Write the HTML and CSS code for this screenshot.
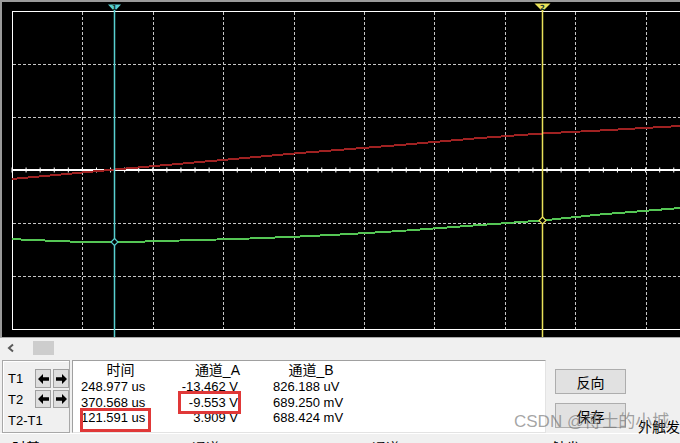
FILE: index.html
```html
<!DOCTYPE html>
<html lang="zh">
<head>
<meta charset="utf-8">
<title>示波器</title>
<link rel="stylesheet" href="styles.css">
</head>
<body>
<div class="scope">
  <svg class="screen" width="678" height="335" viewBox="2 2 678 335">
    <rect x="2" y="2" width="678" height="335" fill="#000"/>
    <g class="grid" stroke="#c6c6c6" stroke-width="1" stroke-dasharray="3 2" shape-rendering="crispEdges">
      <line x1="82.5" y1="12" x2="82.5" y2="329"/>
      <line x1="153.5" y1="12" x2="153.5" y2="329"/>
      <line x1="223.5" y1="12" x2="223.5" y2="329"/>
      <line x1="294.5" y1="12" x2="294.5" y2="329"/>
      <line x1="364.5" y1="12" x2="364.5" y2="329"/>
      <line x1="434.5" y1="12" x2="434.5" y2="329"/>
      <line x1="505.5" y1="12" x2="505.5" y2="329"/>
      <line x1="575.5" y1="12" x2="575.5" y2="329"/>
      <line x1="646.5" y1="12" x2="646.5" y2="329"/>
      <line x1="13" y1="64.5" x2="680" y2="64.5"/>
      <line x1="13" y1="117.5" x2="680" y2="117.5"/>
      <line x1="13" y1="223.5" x2="680" y2="223.5"/>
      <line x1="13" y1="276.5" x2="680" y2="276.5"/>
    </g>
    <path d="M680 11.5 H12.5 V329.5 H680" fill="none" stroke="#ffffff" stroke-width="1" shape-rendering="crispEdges"/>
    <line x1="12" y1="170" x2="680" y2="170" stroke="#ffffff" stroke-width="2" shape-rendering="crispEdges"/>
    <line x1="11.5" y1="170" x2="680" y2="170" stroke="#ffffff" stroke-width="5" stroke-dasharray="1 13.08"/>
    <polyline fill="none" stroke="#a02222" stroke-width="2" shape-rendering="crispEdges"
      points="12,179 115,169.5 200,162 300,153 400,145 480,138 542,133.5 600,130.5 680,126"/>
    <polyline fill="none" stroke="#55c655" stroke-width="2" shape-rendering="crispEdges"
      points="12,239 30,240 60,241 80,242 110,242.5 130,242 160,241 200,240 250,238.5 300,236.5 350,234 400,231 440,228 480,225 542,220.5 600,214.5 680,208"/>
    <line x1="114.5" y1="11" x2="114.5" y2="337" stroke="#58cfd0" stroke-width="1.5"/>
    <line x1="542.5" y1="11" x2="542.5" y2="337" stroke="#e9e25a" stroke-width="1.5"/>
    <polygon points="114.5,238.5 118,242 114.5,245.5 111,242" fill="#000" stroke="#58cfd0" stroke-width="1.2"/>
    <polygon points="542.5,217 546,220.5 542.5,224 539,220.5" fill="#000" stroke="#e9e25a" stroke-width="1.2"/>
    <polygon points="108,4.5 121,4.5 114.5,11.5" fill="#58cfd0"/>
    <text x="114.5" y="10" class="mk">1</text>
    <polygon points="534.5,3.5 550.5,3.5 542.5,11.5" fill="#e9e25a"/>
    <text x="542.5" y="9.5" class="mk">2</text>
  </svg>
</div>

<div class="scrollbar">
  <svg class="chev" width="8" height="10" viewBox="0 0 8 10"><polyline points="6,1.5 2,5 6,8.5" fill="none" stroke="#5a5a5a" stroke-width="2"/></svg>
  <div class="thumb"></div>
</div>

<div class="panel">
  <div class="group">
    <span class="lbl">T1</span>
    <button class="arr"><svg width="11" height="10" viewBox="0 0 11 10"><polygon points="0,5 5,0 5,3.3 11,3.3 11,6.7 5,6.7 5,10" fill="#000"/></svg></button>
    <button class="arr"><svg width="11" height="10" viewBox="0 0 11 10"><polygon points="11,5 6,0 6,3.3 0,3.3 0,6.7 6,6.7 6,10" fill="#000"/></svg></button>
    <span class="lbl">T2</span>
    <button class="arr"><svg width="11" height="10" viewBox="0 0 11 10"><polygon points="0,5 5,0 5,3.3 11,3.3 11,6.7 5,6.7 5,10" fill="#000"/></svg></button>
    <button class="arr"><svg width="11" height="10" viewBox="0 0 11 10"><polygon points="11,5 6,0 6,3.3 0,3.3 0,6.7 6,6.7 6,10" fill="#000"/></svg></button>
    <span class="lbl wide">T2-T1</span>
  </div>

  <div class="readout">
    <div class="table">
      <div class="h c1">时间</div><div class="h c2">通道_A</div><div class="h c3">通道_B</div>
      <div class="c1">248.977 us</div><div class="c2">-13.462 V</div><div class="c3">826.188 uV</div>
      <div class="c1">370.568 us</div><div class="c2">-9.553 V</div><div class="c3">689.250 mV</div>
      <div class="c1">121.591 us</div><div class="c2">3.909 V</div><div class="c3">688.424 mV</div>
    </div>
    <div class="mark mark-time"></div>
    <div class="mark mark-volt"></div>
  </div>

  <div class="actions">
    <button class="btn">反向</button>
    <button class="btn">保存</button>
  </div>

  <div class="ext">外触发</div>
</div>

<div class="footer">
  <span>时基</span><span>通道</span><span>通道</span><span>触发</span>
</div>

<div class="watermark">CSDN @博士的小城</div>
</body>
</html>
```

FILE: styles.css
```css
* { box-sizing: border-box; }

html, body {
  margin: 0;
  padding: 0;
}

body {
  width: 680px;
  height: 443px;
  overflow: hidden;
  position: relative;
  background: #f0f0f0;
  font-family: "Liberation Sans", "Noto Sans CJK SC", sans-serif;
  font-size: 13px;
  color: #000;
}

.scope {
  height: 337px;
  border-top: 2px solid #9a9a9a;
  border-left: 2px solid #9a9a9a;
  background: #000;
}

.screen { display: block; }

.mk {
  font-family: "DejaVu Sans", sans-serif;
  font-size: 7px;
  font-weight: bold;
  fill: #10302f;
  text-anchor: middle;
}

.scrollbar {
  height: 20px;
  border-top: 1px solid #a8a8a8;
  display: flex;
  align-items: center;
  padding-left: 7px;
}

.chev { display: block; }

.thumb {
  margin-left: 18px;
  width: 21px;
  height: 14px;
  background: #cdcdcd;
}

.panel {
  display: flex;
  height: 76px;
  padding-top: 3px;
}

.group {
  margin-left: 2px;
  width: 68px;
  height: 73px;
  border: 1px solid #a8a8a8;
  box-shadow: inset 1px 1px 0 #ffffff;
  padding: 8px 0 0 5px;
  display: grid;
  grid-template-columns: 25px 16px 16px;
  grid-template-rows: 19px 18px 20px;
  column-gap: 2px;
  row-gap: 2px;
  align-items: center;
}

.lbl {
  font-size: 13px;
  line-height: 15px;
}

.lbl.wide { grid-column: 1 / -1; }

.arr {
  width: 16px;
  height: 100%;
  padding: 0;
  margin: 0;
  border: 1px solid #a0a0a0;
  background: #dedede;
  display: flex;
  align-items: center;
  justify-content: center;
}

.arr svg { display: block; }

.readout {
  position: relative;
  margin-left: 2px;
  width: 479px;
  height: 73px;
  background: #fff;
  border-top: 1px solid #a0a0a0;
  border-left: 1px solid #a0a0a0;
  border-right: 1px solid #e3e3e3;
  border-bottom: 1px solid #e3e3e3;
  padding-left: 8px;
}

.table {
  display: grid;
  grid-template-columns: 79px 78px 111px;
  grid-template-rows: 18px 15.5px 15.5px 15.5px;
  align-items: center;
  font-size: 13px;
  line-height: 15px;
}

.h {
  font-size: 14px;
  line-height: 18px;
}

.c1.h { text-align: center; }
.c2 { text-align: right; }
.c2.h { margin-right: -2px; }
.c3 { padding-left: 35px; }
.c3.h { text-align: center; }

.mark {
  position: absolute;
  border: 3px solid #e03838;
}

.mark-time {
  left: 7px;
  top: 47px;
  width: 71px;
  height: 24px;
}

.mark-volt {
  left: 105px;
  top: 30px;
  width: 63px;
  height: 23px;
}

.actions {
  margin-left: 9px;
  padding-top: 9px;
  display: flex;
  flex-direction: column;
  gap: 9px;
}

.btn {
  width: 71px;
  height: 25px;
  margin: 0;
  padding: 0;
  border: 1px solid #adadad;
  background: #e1e1e1;
  font-family: "Noto Sans CJK SC", sans-serif;
  font-size: 14px;
  line-height: 20px;
  color: #000;
}

.ext {
  flex: none;
  margin-left: 12px;
  margin-top: 57px;
  font-family: "Noto Sans CJK SC", sans-serif;
  font-size: 14px;
  line-height: 18px;
  white-space: nowrap;
}

.footer {
  height: 10px;
  border-top: 1px solid #ffffff;
  display: grid;
  grid-template-columns: repeat(4, 180px);
  padding: 4px 0 0 12px;
  font-family: "Noto Sans CJK SC", sans-serif;
  font-size: 14px;
  line-height: 18px;
  overflow: hidden;
}

.watermark {
  position: absolute;
  left: 514px;
  top: 411px;
  font-size: 17px;
  line-height: 22px;
  color: rgba(105, 105, 105, 0.6);
  white-space: nowrap;
  pointer-events: none;
}
```
